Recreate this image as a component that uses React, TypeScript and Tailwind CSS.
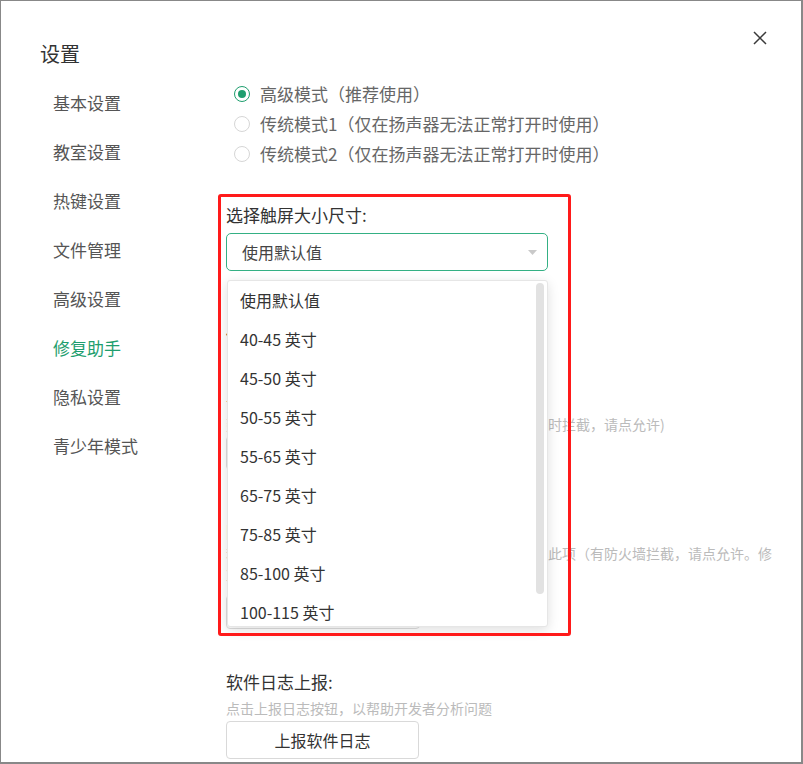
const NAV = ["基本设置", "教室设置", "热键设置", "文件管理", "高级设置", "修复助手", "隐私设置", "青少年模式"]

const MODES = [
  { label: "高级模式（推荐使用）", checked: true },
  { label: "传统模式1（仅在扬声器无法正常打开时使用）", checked: false },
  { label: "传统模式2（仅在扬声器无法正常打开时使用）", checked: false },
]

const SIZES = [
  "使用默认值",
  "40-45 英寸",
  "45-50 英寸",
  "50-55 英寸",
  "55-65 英寸",
  "65-75 英寸",
  "75-85 英寸",
  "85-100 英寸",
  "100-115 英寸",
  "115-125 英寸",
]

function Radio({ checked }: { checked: boolean }) {
  return checked ? (
    <span className="flex h-[16px] w-[16px] items-center justify-center rounded-full border-[1.5px] border-[#1e9e6e]">
      <span className="h-[8px] w-[8px] rounded-full bg-[#1e9e6e]" />
    </span>
  ) : (
    <span className="h-[16px] w-[16px] rounded-full border-[1.5px] border-[#d6d6d6]" />
  )
}

export default function App() {
  return (
    <div className="relative h-[764px] w-[803px] overflow-hidden border-l border-t border-r-2 border-b-2 border-[#888] bg-white font-['Noto_Sans_CJK_SC','Microsoft_YaHei',sans-serif]">
      <button className="absolute right-[34px] top-[30px] p-0">
        <svg width="14" height="14" viewBox="0 0 14 14">
          <path d="M1 1L13 13M13 1L1 13" stroke="#3a3a3a" strokeWidth="1.5" />
        </svg>
      </button>

      <h1 className="pl-[39px] pt-[40px] text-[20px] leading-[26px] text-[#333]">设置</h1>

      <div className="mt-[11px] flex">
        <nav className="w-[225px] shrink-0 pl-[52px]">
          {NAV.map((item) => (
            <div
              key={item}
              className={`h-[49px] text-[17px] leading-[49px] ${item === "修复助手" ? "text-[#1e9e6e]" : "text-[#555]"}`}
            >
              {item}
            </div>
          ))}
        </nav>

        <main className="flex-1 pt-[1px]">
          <div className="pl-[8px]">
            {MODES.map((m) => (
              <div key={m.label} className="flex h-[30px] items-center gap-[10px] text-[17px] text-[#666]">
                <Radio checked={m.checked} />
                <span>{m.label}</span>
              </div>
            ))}
          </div>

          <div className="relative mt-[34px] w-[322px]">
            <div className="text-[17px] leading-[24px] text-[#333]">选择触屏大小尺寸:</div>
            <div className="mt-[6px] flex h-[38px] items-center justify-between rounded-[5px] border-[1.5px] border-[#34b084] pl-[15px] pr-[10px] text-[16px] text-[#444]">
              <span>使用默认值</span>
              <svg width="9" height="5" viewBox="0 0 9 5">
                <polygon points="0,0 9,0 4.5,5" fill="#c9c9c9" />
              </svg>
            </div>

            <div className="absolute left-[1px] top-[77px] z-10 h-[347px] w-[321px] overflow-hidden rounded-[3px] border border-[#e6e6e6] bg-white shadow-[0_3px_12px_rgba(0,0,0,0.13)]">
              {SIZES.map((s) => (
                <div key={s} className="h-[39px] pl-[12px] text-[16px] leading-[39px] text-[#333]">
                  {s}
                </div>
              ))}
              <div className="absolute right-[3px] top-[2px] h-[311px] w-[8px] rounded-full bg-[#e2e2e2]" />
            </div>
          </div>

          <div className="mt-[52px] text-[17px] leading-[24px] text-[#333]">修复助手</div>

          <div className="mt-[43px] text-[16px] leading-[24px] text-[#333]">音频修复:</div>
          <div className="text-[14px] leading-[20px] text-[#bbb]">
            建议在扬声器无法正常打开时尝试修复（有安全软件时拦截，请点允许)
          </div>
          <button className="mt-[2px] h-[34px] w-[194px] rounded-[4px] border border-[#ddd] text-[16px] text-[#333]">
            一键修复
          </button>

          <div className="mt-[49px] text-[16px] leading-[24px] text-[#333]">网络修复:</div>
          <div className="w-[550px] text-[14px] leading-[20px] text-[#bbb]">
            若出现网络连接异常或无法正常登录账号时，请勾选此项（有防火墙拦截，请点允许。修复完成后请重启软件）
          </div>
          <button className="mt-[12px] h-[34px] w-[194px] rounded-[4px] border border-[#ddd] text-[16px] text-[#333]">
            一键修复
          </button>

          <div className="mt-[41px] text-[17px] leading-[24px] text-[#333]">软件日志上报:</div>
          <div className="mt-[4px] text-[14px] leading-[20px] text-[#bbb]">点击上报日志按钮，以帮助开发者分析问题</div>
          <button className="mt-[3px] h-[38px] w-[193px] rounded-[4px] border border-[#d9d9d9] text-[16px] text-[#333]">
            上报软件日志
          </button>
        </main>
      </div>

      <div className="pointer-events-none absolute left-[217px] top-[193px] z-20 h-[442px] w-[353px] rounded-[3px] border-[3px] border-[#ff1a1a]" />
    </div>
  )
}
